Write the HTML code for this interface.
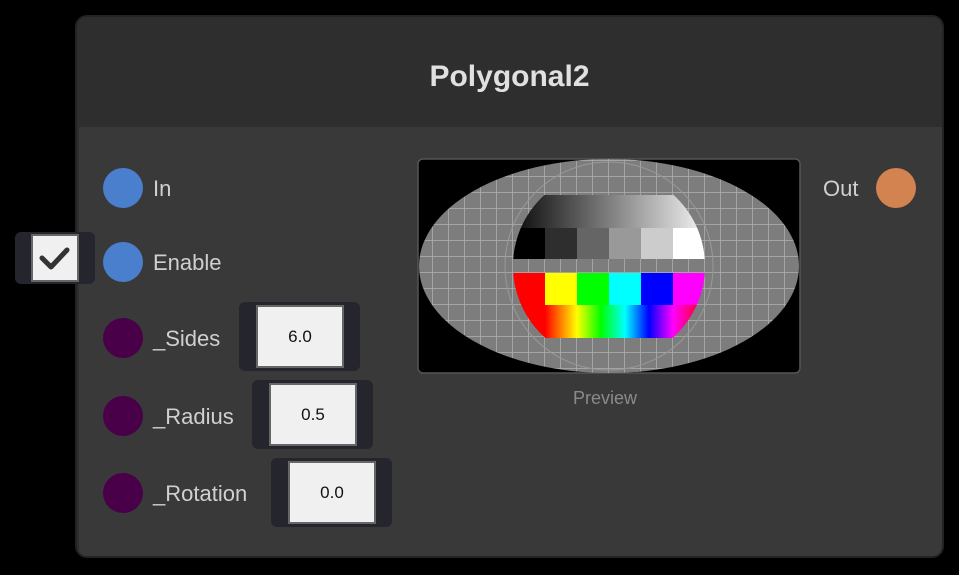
<!DOCTYPE html>
<html><head><style>
body{margin:0;background:#000;width:959px;height:575px;position:relative;overflow:hidden;font-family:"Liberation Sans",sans-serif}
.node{position:absolute;left:75px;top:15px;width:865px;height:539px;border:2px solid #232323;border-radius:12px;background:#2e2e2e;overflow:hidden}
.hdr{height:109px;text-align:center;line-height:120px;color:#e0e0e0;font-size:30px;font-weight:bold}
.body{position:absolute;left:2px;top:110px;right:0;bottom:0;background:#393939}
.c{position:absolute;width:40px;height:40px;border-radius:50%}
.l{position:absolute;color:#d0d0d0;font-size:22px;line-height:24px}
.box{position:absolute;background:#25252d;border-radius:6px}
.w{position:absolute;background:#f0f0f0;border:2px solid #666;box-sizing:border-box;color:#111;font-size:17px;text-align:center}
</style></head><body>
<div class="node"><div class="hdr">Polygonal2</div><div class="body"></div></div>
<div class="c" style="left:103px;top:168px;background:#4a7fcd"></div><div class="l" style="left:153px;top:177px">In</div>
<div class="c" style="left:103px;top:242px;background:#4a7fcd"></div><div class="l" style="left:153px;top:251px">Enable</div>
<div class="c" style="left:103px;top:318px;background:#4a0048"></div><div class="l" style="left:153px;top:327px">_Sides</div>
<div class="c" style="left:103px;top:396px;background:#4a0048"></div><div class="l" style="left:153px;top:405px">_Radius</div>
<div class="c" style="left:103px;top:473px;background:#4a0048"></div><div class="l" style="left:153px;top:482px">_Rotation</div>
<div class="box" style="left:15px;top:232px;width:80px;height:52px"></div>
<div class="w" style="left:31px;top:234px;width:48px;height:48px"><svg width="44" height="44" viewBox="0 0 44 44"><path d="M9 22 L18 31 L34 14" fill="none" stroke="#333" stroke-width="5" stroke-linecap="round" stroke-linejoin="round"/></svg></div>
<div class="box" style="left:239px;top:302px;width:121px;height:69px"></div>
<div class="w" style="left:256px;top:305px;width:88px;height:63px;line-height:59px">6.0</div>
<div class="box" style="left:252px;top:380px;width:121px;height:69px"></div>
<div class="w" style="left:269px;top:383px;width:88px;height:63px;line-height:59px">0.5</div>
<div class="box" style="left:271px;top:458px;width:121px;height:69px"></div>
<div class="w" style="left:288px;top:461px;width:88px;height:63px;line-height:59px">0.0</div>
<div class="l" style="left:823px;top:177px">Out</div>
<div class="c" style="left:876px;top:168px;background:#d2834f"></div>
<svg style="position:absolute;left:417px;top:158px" width="384" height="216" viewBox="417 158 384 216">
<defs>
<clipPath id="e"><ellipse cx="609" cy="266" rx="190" ry="107"/></clipPath>
<clipPath id="ci"><circle cx="609" cy="266" r="96"/></clipPath>
<linearGradient id="g"><stop offset="0" stop-color="#000"/><stop offset="1" stop-color="#fff"/></linearGradient>
<linearGradient id="r"><stop offset="0" stop-color="#f00"/><stop offset=".2" stop-color="#ff0"/><stop offset=".35" stop-color="#0f0"/><stop offset=".5" stop-color="#0ff"/><stop offset=".65" stop-color="#00f"/><stop offset=".8" stop-color="#f0f"/><stop offset="1" stop-color="#f00"/></linearGradient>
<pattern id="p" x="0" y="0" width="16" height="16" patternUnits="userSpaceOnUse"><rect width="16" height="16" fill="#7d7d7d"/><path d="M0 0H16M0 0V16" stroke="#b0b0b0" stroke-width="1.5"/></pattern>
</defs>
<rect x="418" y="159" width="382" height="214" rx="5" fill="#000" stroke="#555" stroke-width="1.5"/>
<g clip-path="url(#e)"><rect x="418" y="159" width="382" height="214" fill="url(#p)"/>
<circle cx="609" cy="266" r="104" fill="none" stroke="#999"/></g>
<g clip-path="url(#ci)">
<rect x="505" y="195" width="210" height="34" fill="url(#g)"/>
<rect x="505" y="228" width="40" height="31" fill="#000"/><rect x="545" y="228" width="32" height="31" fill="#2e2e2e"/><rect x="577" y="228" width="32" height="31" fill="#656565"/><rect x="609" y="228" width="32" height="31" fill="#999"/><rect x="641" y="228" width="32" height="31" fill="#ccc"/><rect x="673" y="228" width="40" height="31" fill="#fff"/>
<rect x="505" y="273" width="40" height="65" fill="#f00"/><rect x="545" y="273" width="32" height="32" fill="#ff0"/><rect x="577" y="273" width="32" height="32" fill="#0f0"/><rect x="609" y="273" width="32" height="32" fill="#0ff"/><rect x="641" y="273" width="32" height="32" fill="#00f"/><rect x="673" y="273" width="40" height="32" fill="#f0f"/>
<rect x="545" y="305" width="160" height="33" fill="url(#r)"/>
</g>
</svg>
<div style="position:absolute;left:540px;top:388px;width:130px;text-align:center;color:#8a8a8a;font-size:18px">Preview</div>
</body></html>
